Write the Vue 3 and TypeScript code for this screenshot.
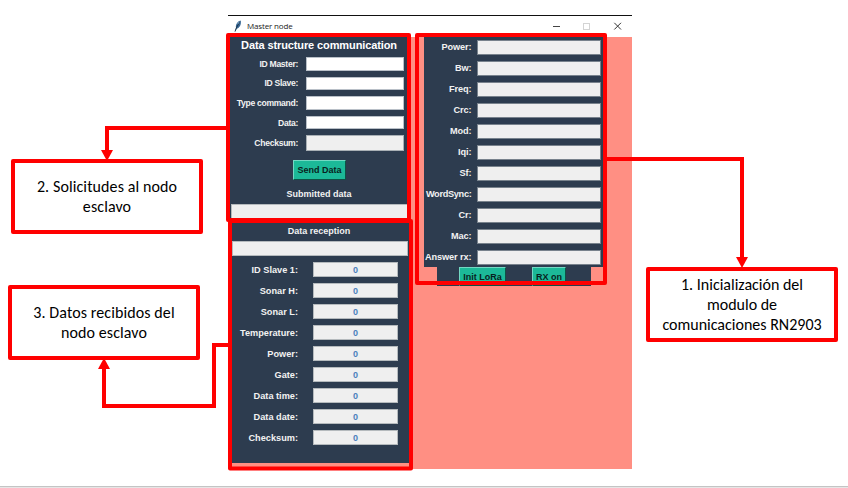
<script setup lang="ts">
interface Field {
  label: string
  readonly?: boolean
}

const requestFields: Field[] = [
  { label: 'ID Master:' },
  { label: 'ID Slave:' },
  { label: 'Type command:' },
  { label: 'Data:' },
  { label: 'Checksum:', readonly: true },
]

const receivedFields: string[] = [
  'ID Slave 1:', 'Sonar H:', 'Sonar L:', 'Temperature:', 'Power:',
  'Gate:', 'Data time:', 'Data date:', 'Checksum:',
]

const radioFields: string[] = [
  'Power:', 'Bw:', 'Freq:', 'Crc:', 'Mod:', 'Iqi:', 'Sf:', 'WordSync:', 'Cr:', 'Mac:', 'Answer rx:',
]
</script>

<template>
  <main class="slide">
    <section class="window">
      <header class="titlebar">
        <svg class="feather" viewBox="0 0 8 12">
          <path d="M1 11.5 L2 8 C1.4 5 3.2 1.2 6.6 .4 C7.6 3.6 6 7.6 2.8 8.8 Z" fill="#356694" />
          <path d="M1 11.6 L2.4 7.8 L5.8 1.6" fill="none" stroke="#182b3d" stroke-width=".9" />
          <path d="M3.6 4.2 L5.4 1.7" stroke="#9cc4e4" stroke-width=".8" />
        </svg>
        <span class="title">Master node</span>
        <svg class="controls" viewBox="0 0 80 20">
          <path d="M4 10.5 H11" stroke="#444" stroke-width="1" />
          <rect x="34.5" y="7.5" width="6" height="6" fill="none" stroke="#d4d4d4" />
          <path d="M65.3 6.8 L72 13.5 M72 6.8 L65.3 13.5" stroke="#333" stroke-width="1" />
        </svg>
      </header>

      <div class="body">
        <div class="left">
          <div class="panel request">
            <h1>Data structure communication</h1>
            <div v-for="f in requestFields" :key="f.label" class="row" :class="{ tall: f.readonly }">
              <label>{{ f.label }}</label>
              <div class="entry"></div>
            </div>
            <button class="send">Send Data</button>
            <h2>Submitted data</h2>
            <div class="strip"></div>
          </div>
          <div class="panel reception">
            <h2>Data reception</h2>
            <div class="strip"></div>
            <div class="values">
              <div v-for="label in receivedFields" :key="label" class="row">
                <label>{{ label }}</label>
                <div class="value">0</div>
              </div>
            </div>
          </div>
        </div>
        <div class="right">
          <div class="panel radio">
            <div v-for="label in radioFields" :key="label" class="row">
              <label :class="{ tight: label === 'WordSync:' }">{{ label }}</label>
              <div class="entry"></div>
            </div>
          </div>
          <div class="panel actions">
            <button class="init">Init LoRa</button>
            <button class="rx">RX on</button>
          </div>
        </div>
      </div>
    </section>

    <svg class="marks" viewBox="0 0 848 488">
      <g fill="none" stroke="#f00" stroke-width="4" stroke-linejoin="round">
        <rect x="228" y="35" width="181" height="185" />
        <rect x="230" y="221" width="181" height="247.5" />
        <rect x="417" y="35" width="188" height="248" />
      </g>
      <g fill="none" stroke="#f00" stroke-width="4">
        <path d="M228 128 H107 V153" />
        <path d="M230 345 H214 V406 H104 V367" />
        <path d="M605 159 H742 V260" />
      </g>
      <g fill="#f00">
        <path d="M101 150 H113 L107 161 Z" />
        <path d="M98 369 H110 L104 358 Z" />
        <path d="M736 257 H748 L742 268 Z" />
      </g>
    </svg>

    <div class="callout two">2. Solicitudes al nodo<br />esclavo</div>
    <div class="callout three">3. Datos recibidos del<br />nodo esclavo</div>
    <div class="callout one">1. Inicialización del<br />modulo de<br />comunicaciones RN2903</div>
    <div class="rule"></div>
  </main>
</template>

<style>
body {
  margin: 0;
  background: #fff;
}
</style>

<style scoped>
* {
  box-sizing: border-box;
}
.slide {
  position: relative;
  width: 848px;
  height: 488px;
  overflow: hidden;
  background: #fff;
  font-family: "Liberation Sans", Arial, sans-serif;
}
.window {
  position: absolute;
  left: 228px;
  top: 15px;
  width: 404px;
  height: 454px;
  display: flex;
  flex-direction: column;
}
.titlebar {
  height: 22px;
  border-top: 1px solid #111;
  display: flex;
  align-items: center;
  padding: 0 3px 2px 6px;
  background: #fff;
}
.feather {
  width: 8px;
  height: 12px;
}
.title {
  margin-left: 5px;
  font: 8px/20px "Open Sans", "Noto Sans", sans-serif;
  letter-spacing: -0.15px;
  color: #222;
}
.controls {
  width: 80px;
  height: 20px;
  margin-left: auto;
}
.body {
  flex: 1;
  display: flex;
  background: #ff8f83;
}
.left {
  width: 182px;
}
.right {
  margin-left: 13.5px;
  width: 180px;
}
.panel {
  background: #2d3c4f;
  color: #f2f2f2;
  font-weight: bold;
}
h1,
h2 {
  margin: 0;
  text-align: center;
  white-space: nowrap;
}
h1 {
  height: 16px;
  font-size: 11px;
  letter-spacing: -0.11px;
  line-height: 16px;
  margin-bottom: 1px;
  color: #fff;
}
h2 {
  font-size: 9px;
}
.row {
  display: flex;
  align-items: center;
  justify-content: flex-end;
}
label {
  white-space: nowrap;
  text-align: right;
}
.request {
  height: 184px;
}
.request .row {
  height: 19.6px;
  padding-right: 6px;
}
.request .row.tall {
  height: 21px;
}
.request label {
  font-size: 8.6px;
  letter-spacing: -0.3px;
  margin-right: 8px;
}
.request .entry {
  width: 98px;
  height: 13.5px;
  background: #fff;
  border: 0.5px solid #b9c0c8;
}
.request .tall .entry {
  height: 16px;
  background: #efefef;
  border: 1px solid #a9b0b5;
}
button {
  display: block;
  padding: 0;
  border: 1px solid;
  border-color: #73d8c3 #0d5346 #0d5346 #73d8c3;
  border-radius: 0;
  background: #1cb998;
  color: #081f20;
  font: bold 9px/16px "Liberation Sans", Arial, sans-serif;
  text-align: center;
  white-space: nowrap;
}
.send {
  width: 53px;
  height: 20px;
  margin: 6.6px 0 0 65px;
  line-height: 18px;
}
.request h2 {
  height: 24px;
  line-height: 29px;
}
.strip {
  width: 177px;
  margin-left: 3px;
  background: #efefef;
  border: 1px solid #b5babd;
}
.request .strip {
  height: 16px;
}
.reception {
  width: 182px;
  height: 242px;
}
.reception h2 {
  height: 20px;
  line-height: 20px;
}
.reception .strip {
  width: 176px;
  height: 15px;
  margin-left: 4px;
}
.values {
  padding-top: 3px;
}
.values .row {
  height: 21px;
  padding-right: 12px;
}
.values label {
  font-size: 9.2px;
  margin-right: 15px;
}
.value {
  width: 85px;
  height: 15px;
  background: #efefef;
  border: 1px solid #b5babd;
  color: #4c81bd;
  font-size: 9px;
  line-height: 14px;
  text-align: center;
}
.radio {
  height: 230px;
}
.radio .row {
  height: 21px;
  padding-right: 3px;
}
.radio label {
  font-size: 9.2px;
  letter-spacing: -0.1px;
  margin-right: 5px;
  padding-bottom: 2px;
}
.radio label.tight {
  letter-spacing: -0.3px;
}
.radio .entry {
  width: 124px;
  height: 15px;
  background: #efefef;
  border: 0.5px solid #78828c;
}
.actions {
  width: 154px;
  height: 19px;
  margin-left: 13.5px;
  display: flex;
}
.actions button {
  height: 19px;
  line-height: 18px;
}
.init {
  width: 47px;
  margin-left: 22px;
}
.rx {
  width: 34px;
  margin-left: 26px;
}
.marks {
  position: absolute;
  left: 0;
  top: 0;
  width: 848px;
  height: 488px;
}
.callout {
  position: absolute;
  display: flex;
  align-items: center;
  justify-content: center;
  width: 192px;
  height: 75px;
  border: 4px solid #f00;
  border-radius: 2px;
  background: #fff;
  color: #000;
  font: 16px/20px Carlito, Lato, sans-serif;
  text-align: center;
  white-space: nowrap;
}
.two {
  left: 11px;
  top: 159px;
  letter-spacing: 0.1px;
}
.three {
  left: 8px;
  top: 285px;
  letter-spacing: 0.1px;
}
.one {
  left: 646px;
  top: 267px;
}
.rule {
  position: absolute;
  left: 0;
  bottom: 0;
  width: 848px;
  height: 2px;
  border-top: 1px solid #c4c4c4;
  background: #e6e6e6;
}
</style>
